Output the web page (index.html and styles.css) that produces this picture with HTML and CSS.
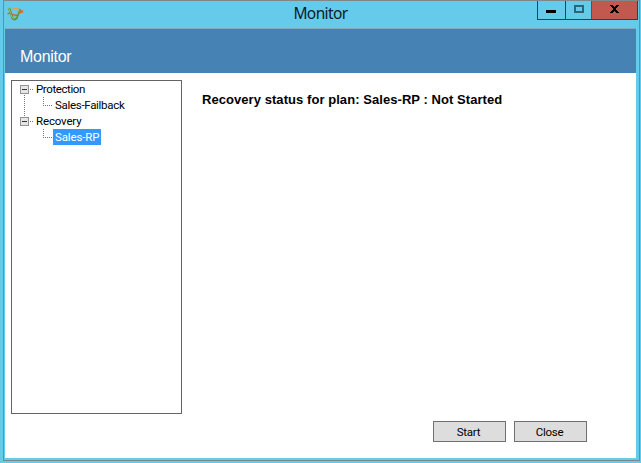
FILE: index.html
```html
<!DOCTYPE html>
<html lang="en">
<head>
<meta charset="utf-8">
<title>Monitor</title>
<link rel="stylesheet" href="styles.css">
</head>
<body>
<div class="window">
  <header class="titlebar">
    <svg class="app-icon" width="17" height="14" viewBox="0 0 17 14" fill="none">
      <path d="M2 1 5.500 11Q7.500 13.500 9.500 11L13 2" stroke="#579247" stroke-width="2.400"/>
      <path d="M1.700 1 5 10Q7 12.500 8.700 10.500L12.200 2" stroke="#a3ca69" stroke-width="1"/>
      <path d="M5.500 2.300Q9 .8 11.500 2" stroke="#f39a32" stroke-width="1.200"/>
      <path d="M.5 6.800 3.500 6M4.500 7.500 10 8.300" stroke="#d85420" stroke-width="1.200"/>
      <path d="M12 5.500 16 4.200" stroke="#ef641b" stroke-width="2.400"/>
    </svg>
    <h1 class="title"><span>Monitor</span></h1>
    <div class="controls">
      <div class="control minimize"><svg width="10" height="3"><path fill="#000" d="M0 0h10v3H0z"/></svg></div>
      <div class="control maximize"><svg width="10" height="8"><path d="M1 1h8v6H1z" fill="none" stroke="#306674" stroke-width="2"/></svg></div>
      <div class="control close"><svg width="9" height="8" shape-rendering="crispEdges"><path d="M0 0h3v1h1v1h1V1h1V0h3v1H8v1H7v1H6v2h1v1h1v1h1v1H6V7H5V6H4v1H3v1H0V7h1V6h1V5h1V3H2V2H1V1H0z"/></svg></div>
    </div>
  </header>
  <div class="banner"><span>Monitor</span></div>
  <main class="content">
    <nav class="tree">
      <div class="row parent"><svg class="branch" width="24" height="16" shape-rendering="crispEdges"><path d="M8.500 4.500h8v8h-8z" fill="#e6e6e6" stroke="#939393"/><path d="M10 8.500h5" stroke="#333"/><path d="M18 8.500h3M12.500 14v2" stroke="#777" stroke-dasharray="1 1"/></svg><span class="label protection">Protection</span></div>
      <div class="row child"><svg class="branch" width="41" height="16" shape-rendering="crispEdges"><path d="M12.500 0v16M31.500 0v9M31 8.500h9" fill="none" stroke="#777" stroke-dasharray="1 1"/></svg><span class="label failback">Sales-Failback</span></div>
      <div class="row parent"><svg class="branch" width="24" height="16" shape-rendering="crispEdges"><path d="M12.500 0v4M18 8.500h3" stroke="#777" stroke-dasharray="1 1"/><path d="M8.500 4.500h8v8h-8z" fill="#e6e6e6" stroke="#939393"/><path d="M10 8.500h5" stroke="#333"/></svg><span class="label recovery">Recovery</span></div>
      <div class="row child"><svg class="branch" width="41" height="16" shape-rendering="crispEdges"><path d="M31.500 0v9M31 8.500h9" fill="none" stroke="#777" stroke-dasharray="1 1"/></svg><span class="label selected">Sales-RP</span></div>
    </nav>
    <section class="details">
      <h2 class="status">Recovery status for plan: Sales-RP : Not Started</h2>
      <div class="actions"><button>Start</button><button>Close</button></div>
    </section>
  </main>
</div>
</body>
</html>
```

FILE: styles.css
```css
* { box-sizing: border-box; }
body {
  margin: 0;
  height: 463px;
  padding: 0 1px 2px 3px;
  background: #66cbea;
  font-family: "Liberation Sans", Arial, sans-serif;
  overflow: hidden;
}
.window {
  height: 461px;
  padding: 0 3px 2px 1px;
  border: 1px solid #80868a;
  display: flex;
  flex-direction: column;
}
.titlebar {
  height: 27px;
  flex: none;
  display: grid;
  grid-template-columns: 110px 1fr 110px;
  margin-right: -3px;
}
.app-icon { margin: 6px 0 0 2px; }
.title {
  margin: 0;
  padding: 3px 3px 0 0;
  text-align: center;
  font: 15.5px/18px "Noto Sans", "Open Sans", sans-serif;
  color: #0c2029;
}
.title span { display: inline-block; letter-spacing: -0.6px; }
.controls {
  justify-self: end;
  display: flex;
  height: 19px;
  margin-right: 1px;
  border: 1px solid #24444f;
  border-top: 0;
}
.control { display: flex; justify-content: center; align-items: center; }
.minimize { width: 27px; padding: 2px 1px 0 0; }
.maximize { width: 26px; border-left: 1px solid #24444f; padding-bottom: 2px; }
.close { width: 46px; border-left: 1px solid #7a4541; background: #c2594f; padding-bottom: 2px; }
.banner {
  height: 45px;
  flex: none;
  padding: 19px 0 0 15px;
  border-top: 1px solid #80aac3;
  background: #4682b4;
  color: #fff;
  font-size: 16px;
  line-height: 18px;
  letter-spacing: -0.3px;
}
.content { flex: 1; min-height: 0; display: flex; background: #fff; padding: 7px 0 0 6px; }
.tree { width: 171px; height: 334px; border: 1px solid #646464; flex: none; }
.row { display: flex; height: 16px; }
.branch { flex: none; display: block; }
.label {
  height: 16px;
  font: 11.5px/16px Roboto, sans-serif;
  color: #000;
  white-space: nowrap;
}
.protection { letter-spacing: -0.4px; }
.failback { padding-left: 2px; letter-spacing: -0.3px; }
.recovery { letter-spacing: -0.15px; }
.selected { background: #3399ff; color: #fff; width: 48px; padding-left: 2px; letter-spacing: -0.15px; }
.details { flex: 1; display: flex; flex-direction: column; padding-left: 20px; }
.status {
  margin: 11px 0 0;
  font-size: 13px;
  line-height: 18px;
  letter-spacing: 0.06px;
  color: #000;
  white-space: nowrap;
}
.actions { display: flex; justify-content: flex-end; gap: 8px; margin: auto 49px 16px 0; }
button {
  width: 73px;
  height: 21px;
  margin: 0;
  padding: 0 2px 0 0;
  border: 1px solid #707070;
  background: #ddd;
  color: #000;
  font: 11.5px/18px Roboto, sans-serif;
  letter-spacing: -0.25px;
}
```
